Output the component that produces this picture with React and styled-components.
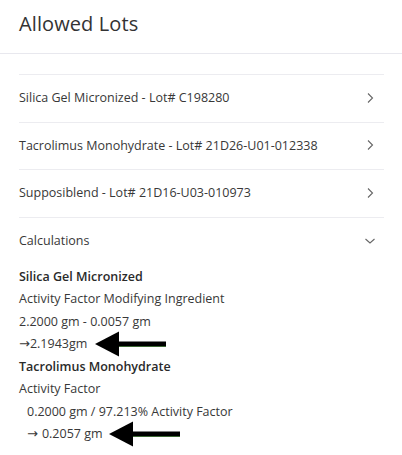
import styled, { createGlobalStyle } from "styled-components";

const GlobalStyle = createGlobalStyle`
  body {
    margin: 0;
    background: #ffffff;
    font-family: "Open Sans", "Liberation Sans", sans-serif;
    color: #333333;
  }
`;

const Page = styled.div`
  width: 402px;
  height: 455px;
  overflow: hidden;
  background: #ffffff;
`;

const Header = styled.header`
  height: 54px;
  display: flex;
  align-items: center;
  padding: 0 19px 7px;
  box-sizing: border-box;
  border-bottom: 1px solid #e8e8ee;
`;

const Title = styled.h1`
  margin: 0;
  font-size: 20px;
  font-weight: 400;
  color: #333;
  letter-spacing: 0.1px;
`;

const List = styled.div`
  margin: 20px 18px 0 19px;
  border-top: 1px solid #ececf0;
`;

const Row = styled.div`
  height: 47.5px;
  display: flex;
  align-items: center;
  justify-content: space-between;
  padding-bottom: 1px;
  box-sizing: border-box;
  border-bottom: ${(p) => (p.last ? "none" : "1px solid #ececf0")};
  font-size: 12.5px;
  color: #383838;
`;

const Chevron = styled.svg`
  width: 12px;
  height: 12px;
  margin-right: 8px;
  flex-shrink: 0;
`;

const Calc = styled.div`
  font-size: 12.5px;
  color: #383838;
`;

const Line = styled.div`
  display: flex;
  align-items: center;
  height: 22.5px;
  padding-left: ${(p) => p.indent || 0}px;
  font-weight: ${(p) => (p.bold ? 600 : 400)};
  color: ${(p) => (p.bold ? "#2a2a2a" : "#383838")};
`;

const Arrow = styled.span`
  font-family: "DejaVu Sans", sans-serif;
  font-size: 13px;
  margin-right: ${(p) => p.space || 0}px;
`;

const Pointer = styled.svg`
  width: 72px;
  height: 26px;
  margin-left: ${(p) => p.gap}px;
  flex-shrink: 0;
`;

const Right = () => (
  <Chevron viewBox="0 0 12 12">
    <path d="M4 1.5 L8.5 6 L4 10.5" fill="none" stroke="#666" strokeWidth="1.1" />
  </Chevron>
);

const Down = () => (
  <Chevron viewBox="0 0 12 12">
    <path d="M1.5 4 L6 8 L10.5 4" fill="none" stroke="#666" strokeWidth="1.1" />
  </Chevron>
);

const BigArrow = ({ gap }) => (
  <Pointer gap={gap} viewBox="0 0 72 26">
    <path d="M23 15.5 L71 15.5" stroke="#7bd36a" strokeWidth="1" />
    <polygon points="0,13 24,0.5 24,25.5" fill="#000" />
    <rect x="22" y="10.5" width="49" height="5" fill="#000" />
  </Pointer>
);

const lots = [
  "Silica Gel Micronized - Lot# C198280",
  "Tacrolimus Monohydrate - Lot# 21D26-U01-012338",
  "Supposiblend - Lot# 21D16-U03-010973",
];

export default function App() {
  return (
    <Page>
      <GlobalStyle />
      <Header>
        <Title>Allowed Lots</Title>
      </Header>
      <List>
        {lots.map((l) => (
          <Row key={l}>
            <span>{l}</span>
            <Right />
          </Row>
        ))}
        <Row last>
          <span>Calculations</span>
          <Down />
        </Row>
        <Calc>
          <Line bold>Silica Gel Micronized</Line>
          <Line>Activity Factor Modifying Ingredient</Line>
          <Line>2.2000 gm - 0.0057 gm</Line>
          <Line>
            <Arrow>→</Arrow>2.1943gm
            <BigArrow gap={8} />
          </Line>
          <Line bold>Tacrolimus Monohydrate</Line>
          <Line>Activity Factor</Line>
          <Line indent={8}>0.2000 gm / 97.213% Activity Factor</Line>
          <Line indent={8}>
            <Arrow space={4}>→</Arrow>0.2057 gm
            <BigArrow gap={6} />
          </Line>
        </Calc>
      </List>
    </Page>
  );
}
